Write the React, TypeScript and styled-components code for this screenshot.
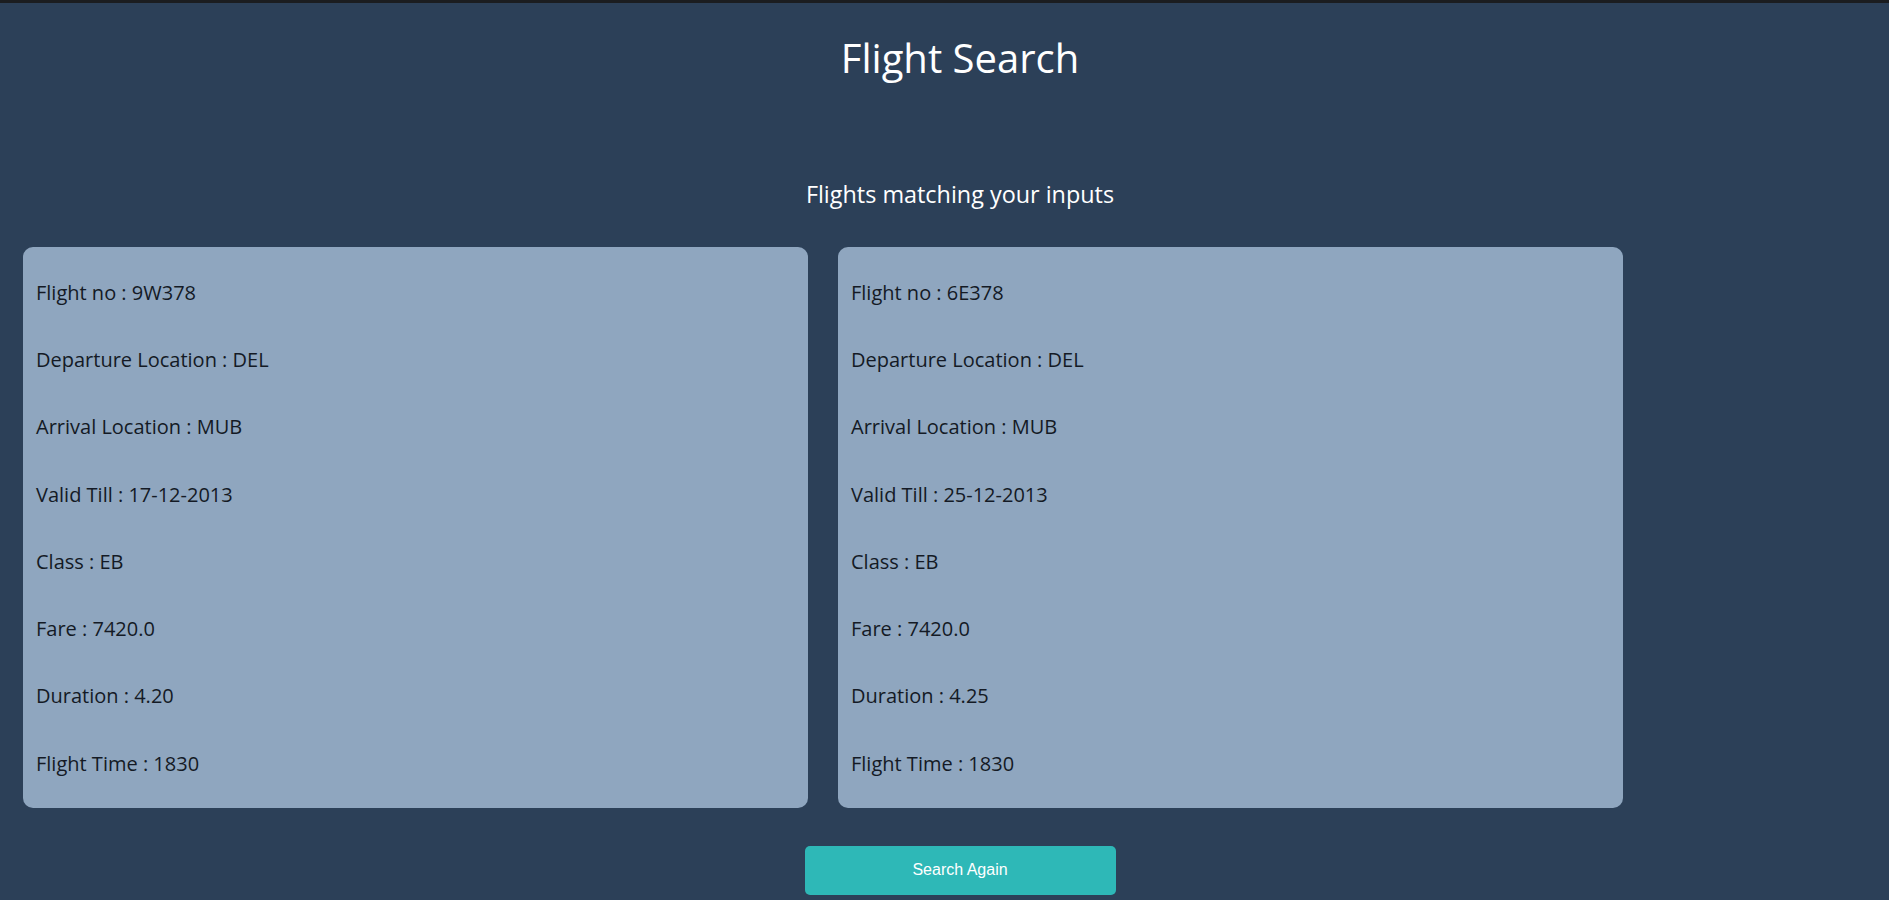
import React from "react";
import styled, { createGlobalStyle } from "styled-components";

const GlobalStyle = createGlobalStyle`
  html, body {
    margin: 0;
    padding: 0;
    background: #2c4058;
    overflow: hidden;
  }
  body {
    font-family: "Open Sans", "Noto Sans", sans-serif;
    font-size: 20px;
  }
`;

const Page = styled.div`
  width: 1920px;
  min-height: 900px;
  background: #2c4058;
  display: flex;
  flex-direction: column;
  align-items: center;
`;

const TopBar = styled.div`
  align-self: stretch;
  height: 3px;
  background: #1b1d20;
`;

const Title = styled.h1`
  margin: 28px 0 0;
  font-size: 40px;
  line-height: 54px;
  font-weight: 400;
  color: #ffffff;
`;

const Subtitle = styled.h3`
  margin: 93px 0 0;
  font-size: 23.4px;
  line-height: 32px;
  font-weight: 400;
  color: #ffffff;
`;

const CardRow = styled.div`
  align-self: stretch;
  display: flex;
  gap: 30px;
  padding-left: 23px;
  margin-top: 37px;
`;

const Card = styled.div`
  width: 785px;
  box-sizing: border-box;
  padding: 32px 13px 31px;
  background: #8fa6bf;
  border-radius: 10px;
  display: flex;
  flex-direction: column;
  gap: 40px;
`;

const Field = styled.p`
  margin: 0;
  font-size: 20px;
  line-height: 27.24px;
  color: #141a25;
`;

const Button = styled.button`
  margin-top: 38px;
  width: 311px;
  height: 49px;
  border: none;
  border-radius: 5px;
  background: #2eb8b7;
  color: #ffffff;
  font-family: "Liberation Sans", Arial, sans-serif;
  font-size: 16px;
  cursor: pointer;
`;

type Flight = {
  no: string;
  dep: string;
  arr: string;
  valid: string;
  cls: string;
  fare: string;
  duration: string;
  time: string;
};

const flights: Flight[] = [
  { no: "9W378", dep: "DEL", arr: "MUB", valid: "17-12-2013", cls: "EB", fare: "7420.0", duration: "4.20", time: "1830" },
  { no: "6E378", dep: "DEL", arr: "MUB", valid: "25-12-2013", cls: "EB", fare: "7420.0", duration: "4.25", time: "1830" },
];

export default function App() {
  return (
    <>
      <GlobalStyle />
      <Page>
        <TopBar />
        <Title>Flight Search</Title>
        <Subtitle>Flights matching your inputs</Subtitle>
        <CardRow>
          {flights.map((f) => (
            <Card key={f.no}>
              <Field>Flight no : {f.no}</Field>
              <Field>Departure Location : {f.dep}</Field>
              <Field>Arrival Location : {f.arr}</Field>
              <Field>Valid Till : {f.valid}</Field>
              <Field>Class : {f.cls}</Field>
              <Field>Fare : {f.fare}</Field>
              <Field>Duration : {f.duration}</Field>
              <Field>Flight Time : {f.time}</Field>
            </Card>
          ))}
        </CardRow>
        <Button>Search Again</Button>
      </Page>
    </>
  );
}
